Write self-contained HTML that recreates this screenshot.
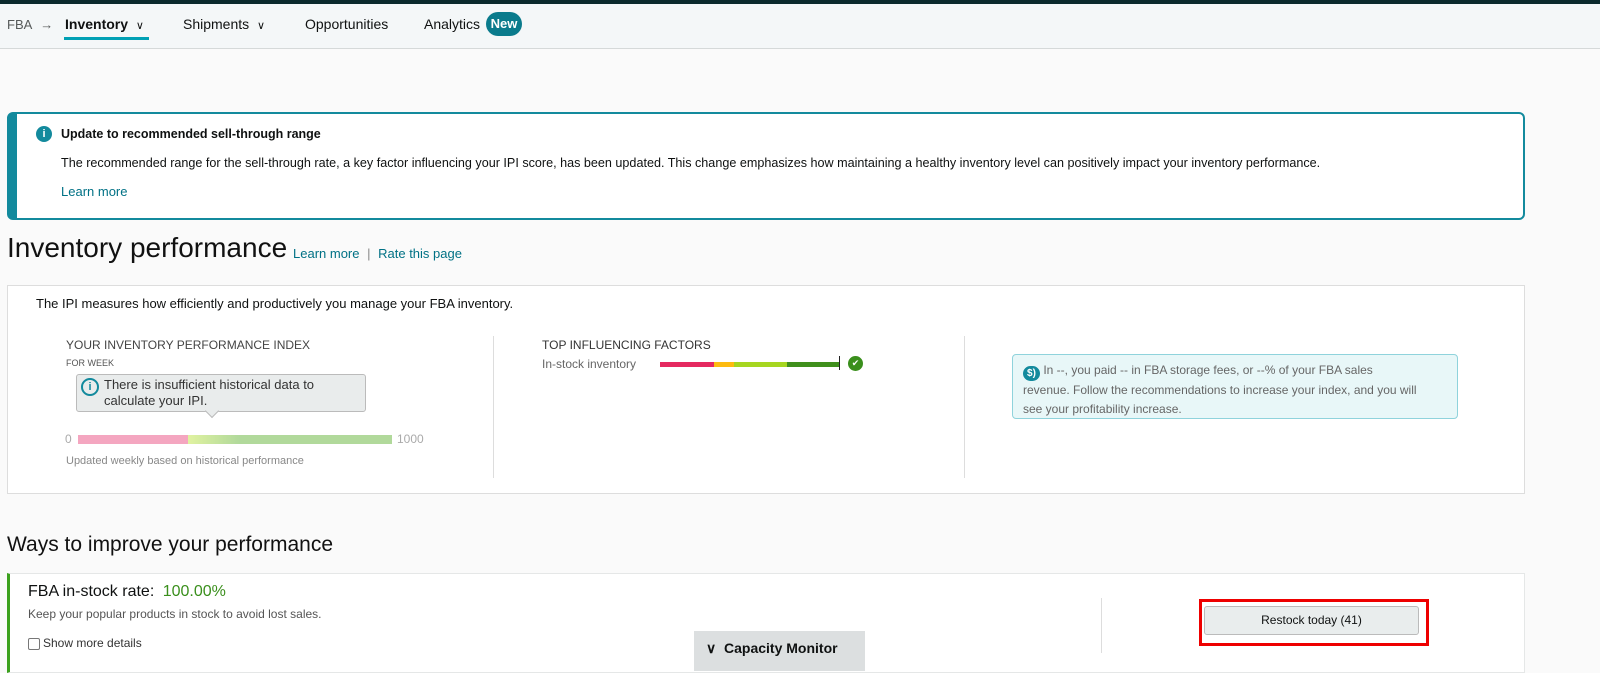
<!DOCTYPE html>
<html><head><style>
*{box-sizing:border-box;margin:0;padding:0}
body{width:1600px;height:669px;overflow:hidden;background:#fafafa;font-family:"Liberation Sans",sans-serif;color:#0f1111;position:relative}
.a{position:absolute;white-space:nowrap}
a{color:#007185;text-decoration:none}
</style></head><body>
<div class="a" style="left:0;top:0;width:1600px;height:4px;background:#0b2a2d"></div>
<div class="a" style="left:0;top:4px;width:1600px;height:45px;background:#f4f7f8;border-bottom:1px solid #d5d9d9"></div>
<div class="a" style="left:7px;top:17px;font-size:13px;color:#565959">FBA <span style="margin-left:5px">→</span></div>
<div class="a" style="left:65px;top:16px;font-size:14px;font-weight:bold">Inventory <span style="font-weight:normal;font-size:11px;margin-left:4px">∨</span></div>
<div class="a" style="left:64px;top:37px;width:85px;height:3px;background:#00a0b4"></div>
<div class="a" style="left:183px;top:16px;font-size:14px">Shipments <span style="font-size:11px;margin-left:4px">∨</span></div>
<div class="a" style="left:305px;top:16px;font-size:14px">Opportunities</div>
<div class="a" style="left:424px;top:16px;font-size:14px">Analytics</div>
<div class="a" style="left:486px;top:12px;width:36px;height:24px;border-radius:12px;background:#0a7b8c;color:#fff;font-weight:bold;font-size:13px;line-height:24px;text-align:center">New</div>

<div class="a" style="left:7px;top:112px;width:1518px;height:108px;border:2px solid #138a9d;border-left:10px solid #138a9d;border-radius:6px;background:#fff"></div>
<div class="a" style="left:36px;top:126px;width:16px;height:16px;border-radius:50%;background:#138a9d;color:#fff;font-size:11px;font-weight:bold;text-align:center;line-height:16px">i</div>
<div class="a" style="left:61px;top:127px;font-size:12.5px;font-weight:bold">Update to recommended sell-through range</div>
<div class="a" style="left:61px;top:156px;font-size:12.6px">The recommended range for the sell-through rate, a key factor influencing your IPI score, has been updated. This change emphasizes how maintaining a healthy inventory level can positively impact your inventory performance.</div>
<div class="a" style="left:61px;top:184px;font-size:13px"><a>Learn more</a></div>

<div class="a" style="left:7px;top:232px;font-size:28px;color:#111">Inventory performance</div>
<div class="a" style="left:293px;top:246px;font-size:13px"><a>Learn more</a> <span style="color:#888;margin:0 4px">|</span> <a>Rate this page</a></div>

<div class="a" style="left:7px;top:285px;width:1518px;height:209px;border:1px solid #ddd;background:#fff"></div>
<div class="a" style="left:36px;top:296px;font-size:13px">The IPI measures how efficiently and productively you manage your FBA inventory.</div>
<div class="a" style="left:66px;top:338px;font-size:12px;color:#444">YOUR INVENTORY PERFORMANCE INDEX</div>
<div class="a" style="left:66px;top:358px;font-size:9px;color:#555">FOR WEEK</div>
<div class="a" style="left:76px;top:374px;width:290px;height:38px;background:#e9ecec;border:1px solid #bbb;border-radius:3px;font-size:13px;color:#333;padding:2px 0 0 27px;white-space:normal;line-height:16px">There is insufficient historical data to calculate your IPI.</div>
<div class="a" style="left:81px;top:378px;width:18px;height:18px;border:2px solid #138a9d;border-radius:50%;color:#138a9d;font-size:11px;text-align:center;line-height:14px;font-weight:bold">i</div>
<div class="a" style="left:207px;top:406px;width:10px;height:10px;background:#e9ecec;border-right:1px solid #bbb;border-bottom:1px solid #bbb;transform:rotate(45deg)"></div>
<div class="a" style="left:65px;top:432px;font-size:12px;color:#aaa">0</div>
<div class="a" style="left:78px;top:435px;width:110px;height:9px;background:#f4a6c0"></div>
<div class="a" style="left:188px;top:435px;width:204px;height:9px;background:linear-gradient(90deg,#e0f2a0,#b1d99b 25%,#b1d99b)"></div>
<div class="a" style="left:397px;top:432px;font-size:12px;color:#aaa">1000</div>
<div class="a" style="left:66px;top:455px;font-size:11px;color:#888">Updated weekly based on historical performance</div>
<div class="a" style="left:493px;top:336px;width:1px;height:142px;background:#ddd"></div>
<div class="a" style="left:542px;top:338px;font-size:12px;color:#333">TOP INFLUENCING FACTORS</div>
<div class="a" style="left:542px;top:357px;font-size:12px;color:#666">In-stock inventory</div>
<div class="a" style="left:660px;top:362px;width:54px;height:5px;background:#e52960"></div>
<div class="a" style="left:714px;top:362px;width:20px;height:5px;background:#fdbb10"></div>
<div class="a" style="left:734px;top:362px;width:53px;height:5px;background:#a6d620"></div>
<div class="a" style="left:787px;top:362px;width:52px;height:5px;background:#3f8f1c"></div>
<div class="a" style="left:839px;top:356px;width:1px;height:14px;background:#222"></div>
<div class="a" style="left:848px;top:356px;width:15px;height:15px;border-radius:50%;background:#3a8f1c;color:#fff;font-size:9px;text-align:center;line-height:15px">✔</div>
<div class="a" style="left:964px;top:336px;width:1px;height:142px;background:#ddd"></div>
<div class="a" style="left:1012px;top:354px;width:446px;height:65px;border:1px solid #8fd3dc;border-radius:4px;background:#e8f7f8;font-size:12px;color:#666;padding:6px 40px 0 10px;white-space:normal;line-height:19px"><span style="display:inline-block;width:17px;height:15px;border-radius:8px;background:#138a9d;color:#fff;font-size:10px;text-align:center;line-height:15px;font-weight:bold;vertical-align:-2px">$)</span> In --, you paid -- in FBA storage fees, or --% of your FBA sales revenue. Follow the recommendations to increase your index, and you will see your profitability increase.</div>

<div class="a" style="left:7px;top:533px;font-size:21px;color:#111">Ways to improve your performance</div>
<div class="a" style="left:7px;top:573px;width:1518px;height:100px;border:1px solid #e5e7e7;border-left:3px solid #3ca11e;background:#fff"></div>
<div class="a" style="left:28px;top:583px;font-size:16px">FBA in-stock rate: <span style="color:#3a8f1c;margin-left:4px">100.00%</span></div>
<div class="a" style="left:28px;top:607px;font-size:12px;color:#555">Keep your popular products in stock to avoid lost sales.</div>
<div class="a" style="left:28px;top:638px;width:12px;height:12px;border:1px solid #777;border-radius:2px;background:#fff"></div>
<div class="a" style="left:43px;top:636px;font-size:12px;color:#333">Show more details</div>
<div class="a" style="left:694px;top:631px;width:171px;height:40px;background:#dcdfe0;font-size:14px;font-weight:bold;padding:9px 0 0 12px">∨ &nbsp;Capacity Monitor</div>
<div class="a" style="left:1101px;top:598px;width:1px;height:55px;background:#ddd"></div>
<div class="a" style="left:1199px;top:599px;width:230px;height:47px;border:3px solid #e00;background:#fff"></div>
<div class="a" style="left:1204px;top:606px;width:215px;height:29px;border:1px solid #bbb;border-radius:3px;background:#e9eded;font-size:12px;text-align:center;line-height:27px">Restock today (41)</div>
</body></html>
